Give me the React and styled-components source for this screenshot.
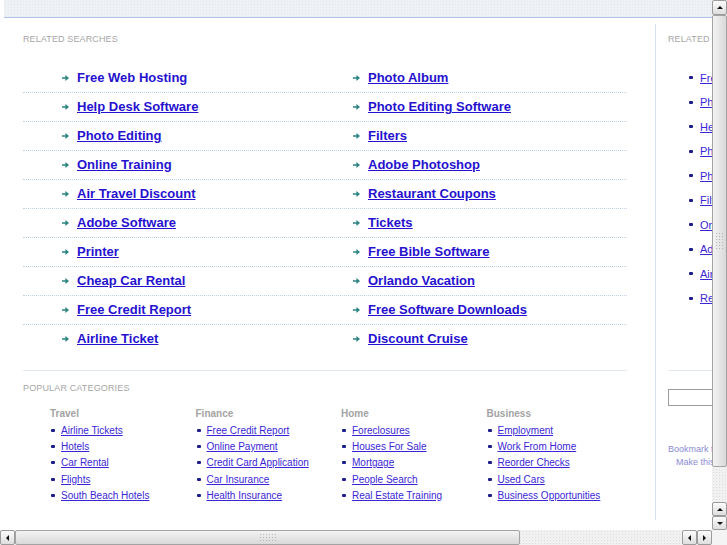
import React from "react";
import styled, { createGlobalStyle, css } from "styled-components";

const GlobalStyle = createGlobalStyle`
	html, body {
		margin: 0;
		padding: 0;
		background: #ffffff;
	}
	body {
		font-family: "Liberation Sans", Arial, sans-serif;
	}
`;

const relatedLeft = [
	"Free Web Hosting",
	"Help Desk Software",
	"Photo Editing",
	"Online Training",
	"Air Travel Discount",
	"Adobe Software",
	"Printer",
	"Cheap Car Rental",
	"Free Credit Report",
	"Airline Ticket",
];

const relatedRight = [
	"Photo Album",
	"Photo Editing Software",
	"Filters",
	"Adobe Photoshop",
	"Restaurant Coupons",
	"Tickets",
	"Free Bible Software",
	"Orlando Vacation",
	"Free Software Downloads",
	"Discount Cruise",
];

const sideLinks = [
	"Free Web Hosting",
	"Photo Album",
	"Help Desk Software",
	"Photo Editing Software",
	"Photo Editing",
	"Filters",
	"Online Training",
	"Adobe Photoshop",
	"Air Travel Discount",
	"Restaurant Coupons",
];

const categories = [
	{
		title: "Travel",
		links: ["Airline Tickets", "Hotels", "Car Rental", "Flights", "South Beach Hotels"],
	},
	{
		title: "Finance",
		links: [
			"Free Credit Report",
			"Online Payment",
			"Credit Card Application",
			"Car Insurance",
			"Health Insurance",
		],
	},
	{
		title: "Home",
		links: ["Foreclosures", "Houses For Sale", "Mortgage", "People Search", "Real Estate Training"],
	},
	{
		title: "Business",
		links: [
			"Employment",
			"Work From Home",
			"Reorder Checks",
			"Used Cars",
			"Business Opportunities",
		],
	},
];

// window frame with the page and the scrollbars
const Viewport = styled.div`
	width: 727px;
	height: 545px;
	display: grid;
	grid-template-columns: 712px 15px;
	grid-template-rows: 530px 15px;
	overflow: hidden;
	background: #ffffff;
`;

const PageArea = styled.div`
	overflow: hidden;
`;

const Page = styled.div`
	width: 940px;
`;

const Header = styled.div`
	height: 17px;
	margin-left: 4px;
	border-bottom: 1px solid #a9c3ea;
	background-color: #eef1f6;
	background-image: radial-gradient(rgba(200, 208, 220, 0.35) 0.6px, transparent 0.8px);
	background-size: 3px 3px;
`;

const Main = styled.div`
	display: flex;
	padding-top: 6px;
`;

const LeftCol = styled.div`
	box-sizing: border-box;
	width: 656px;
	padding: 10px 28px 17px 23px;
	border-right: 1px solid #d6e0f1;
`;

const RightCol = styled.div`
	width: 260px;
	padding: 10px 0 0 12px;
`;

const SectionTitle = styled.div`
	font-size: 9px;
	line-height: 11px;
	letter-spacing: 0.12px;
	text-transform: uppercase;
	color: #a6a6a6;
`;

const LinkBox = styled.div`
	margin-top: 19px;
	padding-bottom: 16px;
	border-bottom: 1px solid #e2e9f6;
`;

const LinkRow = styled.div`
	box-sizing: border-box;
	height: 29px;
	display: grid;
	grid-template-columns: 291px 291px;
	padding-left: 39px;
	border-bottom: 1px dotted #bfd2ec;

	&:last-child {
		border-bottom: none;
	}
`;

const LinkCell = styled.div`
	display: flex;
	align-items: center;
	gap: 8px;
	height: 28px;
`;

const BigLink = styled.a`
	font-size: 13px;
	font-weight: bold;
	line-height: 28px;
	color: #2511cf;
	text-decoration: ${(p) => (p.$plain ? "none" : "underline")};
	cursor: pointer;
`;

const PopularTitle = styled(SectionTitle)`
	margin-top: 12px;
	letter-spacing: 0.15px;
`;

const CategoryGrid = styled.div`
	display: grid;
	grid-template-columns: repeat(4, 145.5px);
	margin-top: 14px;
	padding-left: 27px;
`;

const CategoryTitle = styled.div`
	font-size: 10px;
	line-height: 12px;
	font-weight: bold;
	color: #a3a3a3;
`;

const CategoryList = styled.ul`
	list-style: none;
	margin: 2px 0 0;
	padding: 0;
`;

const bulletItem = css`
	display: flex;
	align-items: center;

	&::before {
		content: "";
		flex: none;
		width: 4px;
		height: 3px;
		border-radius: 1px;
		background: #1d1d8c;
	}
`;

const CategoryItem = styled.li`
	${bulletItem}
	gap: 6px;
	height: 16.3px;
	&::before {
		margin-left: 1px;
	}
`;

const SmallLink = styled.a`
	font-size: ${(p) => p.$size || 10}px;
	color: #3a26d6;
	text-decoration: underline;
	white-space: nowrap;
	cursor: pointer;
`;

const SideList = styled.ul`
	list-style: none;
	margin: 20.5px 0 0;
	padding: 0 0 59.5px 21px;
	border-bottom: 1px solid #e2e9f6;
`;

const SideItem = styled.li`
	${bulletItem}
	gap: 7px;
	height: 24.5px;
`;

const SearchInput = styled.input`
	display: block;
	box-sizing: border-box;
	margin-top: 18px;
	width: 140px;
	height: 17px;
	border: 1px solid #9c9c9c;
	padding: 0 3px;
	font-family: inherit;
	font-size: 10px;
`;

const BookmarkLine = styled.div`
	font-size: 9px;
	line-height: 13px;
	color: #8b8bd4;
	white-space: nowrap;
	margin-top: ${(p) => p.$top || 0}px;
	padding-left: ${(p) => p.$indent || 0}px;
`;

// scrollbars
const VScroll = styled.div`
	display: flex;
	flex-direction: column;
	background: #f1f1f1;
	background-image: radial-gradient(#dddddd 0.6px, transparent 0.8px);
	background-size: 3px 3px;
`;

const HScroll = styled(VScroll)`
	flex-direction: row;
`;

const Corner = styled.div`
	background: #f4f4f4;
`;

const ArrowButton = styled.div`
	box-sizing: border-box;
	flex: none;
	width: 15px;
	height: ${(p) => (p.$short ? 14 : 15)}px;
	display: flex;
	align-items: center;
	justify-content: center;
	border: 1px solid #9b9b9b;
	border-radius: 2px;
	background: linear-gradient(#fbfbfb, #dedede);

	&::after {
		content: "";
		width: 0;
		height: 0;
		${(p) =>
			p.$dir === "up" &&
			css`
				border-left: 3px solid transparent;
				border-right: 3px solid transparent;
				border-bottom: 3px solid #111;
			`}
		${(p) =>
			p.$dir === "down" &&
			css`
				border-left: 3px solid transparent;
				border-right: 3px solid transparent;
				border-top: 3px solid #111;
			`}
		${(p) =>
			p.$dir === "left" &&
			css`
				border-top: 3px solid transparent;
				border-bottom: 3px solid transparent;
				border-right: 3px solid #111;
			`}
		${(p) =>
			p.$dir === "right" &&
			css`
				border-top: 3px solid transparent;
				border-bottom: 3px solid transparent;
				border-left: 3px solid #111;
			`}
	}
`;

const Thumb = styled.div`
	box-sizing: border-box;
	flex: none;
	display: flex;
	align-items: center;
	justify-content: center;
	border: 1px solid #a3a3a3;
	border-radius: 2px;
	${(p) =>
		p.$vertical
			? css`
					height: 452px;
					background: linear-gradient(to right, #f3f3f3, #d9d9d9);
			  `
			: css`
					width: 505px;
					background: linear-gradient(#f3f3f3, #d9d9d9);
			  `}
`;

const Grip = styled.div`
	width: ${(p) => (p.$vertical ? 9 : 18)}px;
	height: ${(p) => (p.$vertical ? 18 : 9)}px;
	background-image: radial-gradient(#b3b3b3 0.7px, transparent 0.9px);
	background-size: 3px 3px;
`;

const Track = styled.div`
	flex: 1;
`;

const Arrow = () => (
	<svg width='7' height='6' viewBox='0 0 7 6'>
		<path d='M0 2.2h3.4V0L7 3 3.4 6V3.8H0z' fill='#2b8583' />
	</svg>
);

const App = () => {
	return (
		<>
			<GlobalStyle />
			<Viewport>
				<PageArea>
					<Page>
						<Header />
						<Main>
							<LeftCol>
								<SectionTitle>Related Searches</SectionTitle>
								<LinkBox>
									{relatedLeft.map((left, i) => (
										<LinkRow key={left}>
											<LinkCell>
												<Arrow />
												<BigLink $plain={i === 0}>{left}</BigLink>
											</LinkCell>
											<LinkCell>
												<Arrow />
												<BigLink>{relatedRight[i]}</BigLink>
											</LinkCell>
										</LinkRow>
									))}
								</LinkBox>
								<PopularTitle>Popular Categories</PopularTitle>
								<CategoryGrid>
									{categories.map((cat) => (
										<div key={cat.title}>
											<CategoryTitle>{cat.title}</CategoryTitle>
											<CategoryList>
												{cat.links.map((link) => (
													<CategoryItem key={link}>
														<SmallLink>{link}</SmallLink>
													</CategoryItem>
												))}
											</CategoryList>
										</div>
									))}
								</CategoryGrid>
							</LeftCol>
							<RightCol>
								<SectionTitle>Related Searches</SectionTitle>
								<SideList>
									{sideLinks.map((link) => (
										<SideItem key={link}>
											<SmallLink $size={11}>{link}</SmallLink>
										</SideItem>
									))}
								</SideList>
								<SearchInput type='text' />
								<BookmarkLine $top={36.5}>Bookmark this page</BookmarkLine>
								<BookmarkLine $indent={8}>Make this your homepage</BookmarkLine>
							</RightCol>
						</Main>
					</Page>
				</PageArea>
				<VScroll>
					<ArrowButton $dir='up' />
					<Thumb $vertical>
						<Grip $vertical />
					</Thumb>
					<Track />
					<ArrowButton $dir='up' $short />
					<ArrowButton $dir='down' $short />
				</VScroll>
				<HScroll>
					<ArrowButton $dir='left' />
					<Thumb>
						<Grip />
					</Thumb>
					<Track />
					<ArrowButton $dir='left' />
					<ArrowButton $dir='right' />
				</HScroll>
				<Corner />
			</Viewport>
		</>
	);
};

export default App;
